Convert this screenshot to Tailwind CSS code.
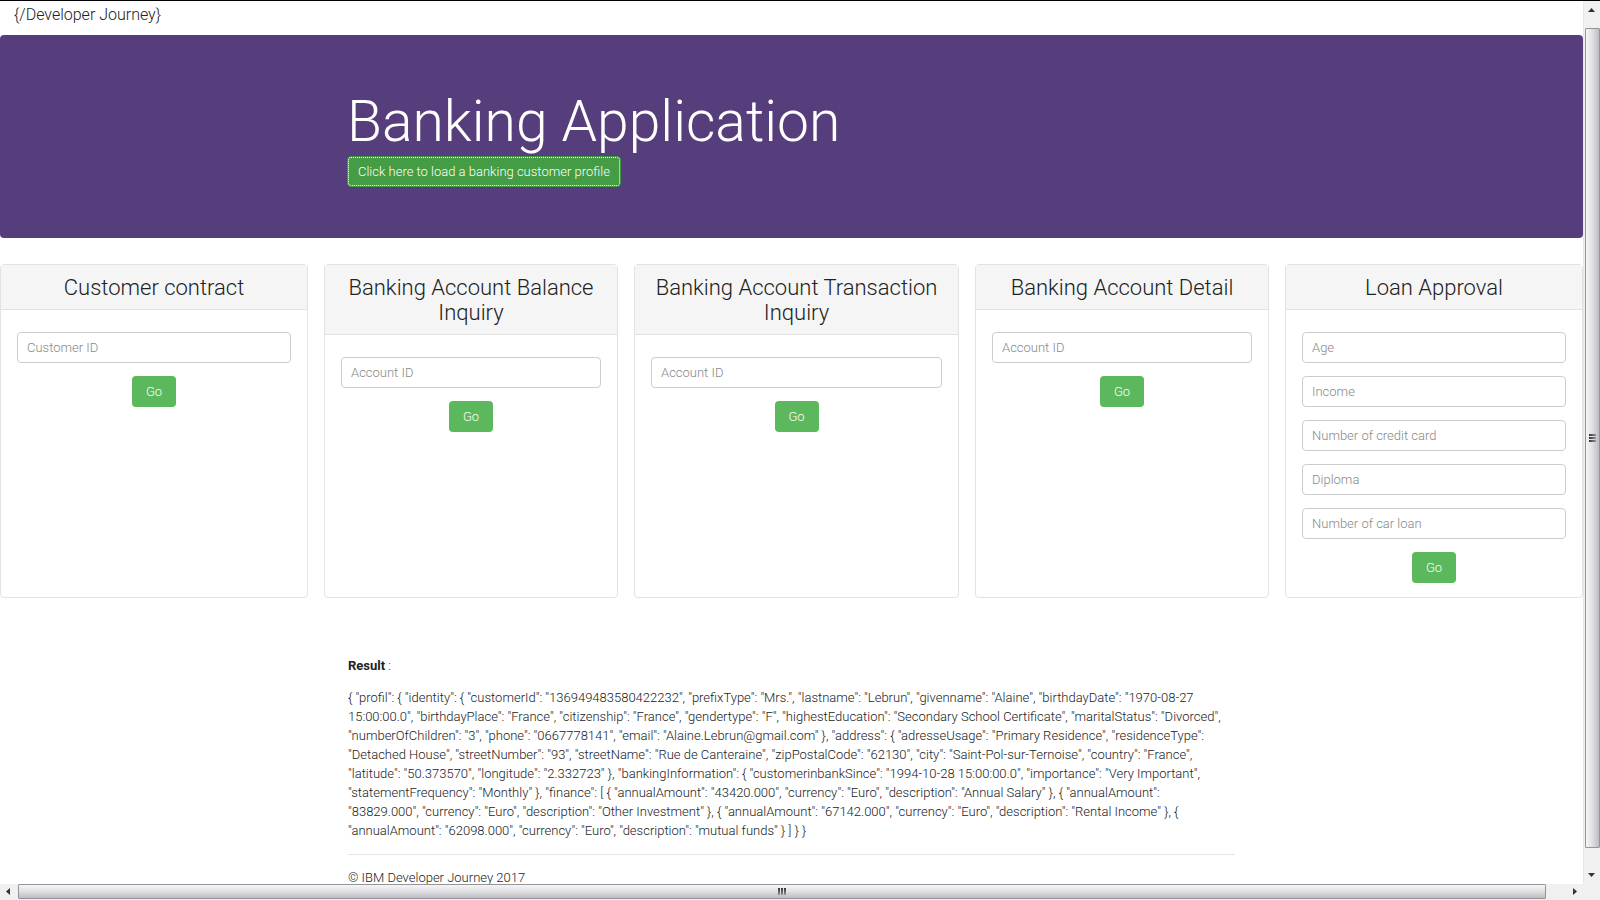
<!DOCTYPE html>
<html lang="en">
<head>
<meta charset="utf-8">
<meta name="viewport" content="width=device-width, initial-scale=1">
<title>Banking Application</title>
<script src="https://cdn.jsdelivr.net/npm/@tailwindcss/browser@4"></script>
</head>
<body class="flex h-screen flex-col overflow-hidden border-t border-black bg-white font-['Roboto','Liberation_Sans',sans-serif] text-[13px] font-light leading-[19px] text-[#202223]">
<div class="flex min-h-0 flex-1">
  <div class="min-w-0 flex-1 overflow-hidden">
    <header class="h-[34px] px-3.5 pt-0.5 text-base leading-6"><a href="#">{/Developer Journey}</a></header>

    <section class="rounded bg-[#563d7c] px-4 pt-[52px] pb-[51px]">
      <div class="mx-auto max-w-[889px]">
        <h1 class="text-[57px] leading-[69px] text-white">Banking Application</h1>
        <button type="button" class="h-[31px] rounded-sm border border-[#419641] bg-[#449d44] px-2.5 text-[13px] text-white outline-1 -outline-offset-2 outline-dotted outline-white">Click here to load a banking customer profile</button>
      </div>
    </section>

    <main>
      <div class="mt-[26px] grid grid-cols-[308fr_294fr_325fr_294fr_298fr] gap-4 text-center">
        <section class="rounded border border-[#e2e2e2]">
          <h2 class="border-b border-[#e2e2e2] bg-[#f5f5f5] px-4 pt-2.5 pb-[9px] text-[22px] leading-[25px]">Customer contract</h2>
          <form class="flex flex-col items-center gap-[13px] px-4 pt-[22px] pb-3.5">
            <input type="text" aria-label="Customer ID" placeholder="Customer ID" class="h-[31px] w-full rounded border border-[#ccc] px-[9px] placeholder:text-[#888]">
            <button type="button" class="h-[31px] w-11 rounded-sm bg-[#5cb85c] text-white">Go</button>
          </form>
        </section>
        <section class="rounded border border-[#e2e2e2]">
          <h2 class="border-b border-[#e2e2e2] bg-[#f5f5f5] px-4 pt-2.5 pb-[9px] text-[22px] leading-[25px]">Banking Account Balance Inquiry</h2>
          <form class="flex flex-col items-center gap-[13px] px-4 pt-[22px] pb-3.5">
            <input type="text" aria-label="Account ID" placeholder="Account ID" class="h-[31px] w-full rounded border border-[#ccc] px-[9px] placeholder:text-[#888]">
            <button type="button" class="h-[31px] w-11 rounded-sm bg-[#5cb85c] text-white">Go</button>
          </form>
        </section>
        <section class="rounded border border-[#e2e2e2]">
          <h2 class="border-b border-[#e2e2e2] bg-[#f5f5f5] px-4 pt-2.5 pb-[9px] text-[22px] leading-[25px]">Banking Account Transaction Inquiry</h2>
          <form class="flex flex-col items-center gap-[13px] px-4 pt-[22px] pb-3.5">
            <input type="text" aria-label="Account ID" placeholder="Account ID" class="h-[31px] w-full rounded border border-[#ccc] px-[9px] placeholder:text-[#888]">
            <button type="button" class="h-[31px] w-11 rounded-sm bg-[#5cb85c] text-white">Go</button>
          </form>
        </section>
        <section class="rounded border border-[#e2e2e2]">
          <h2 class="border-b border-[#e2e2e2] bg-[#f5f5f5] px-4 pt-2.5 pb-[9px] text-[22px] leading-[25px]">Banking Account Detail</h2>
          <form class="flex flex-col items-center gap-[13px] px-4 pt-[22px] pb-3.5">
            <input type="text" aria-label="Account ID" placeholder="Account ID" class="h-[31px] w-full rounded border border-[#ccc] px-[9px] placeholder:text-[#888]">
            <button type="button" class="h-[31px] w-11 rounded-sm bg-[#5cb85c] text-white">Go</button>
          </form>
        </section>
        <section class="rounded border border-[#e2e2e2]">
          <h2 class="border-b border-[#e2e2e2] bg-[#f5f5f5] px-4 pt-2.5 pb-[9px] text-[22px] leading-[25px]">Loan Approval</h2>
          <form class="flex flex-col items-center gap-[13px] px-4 pt-[22px] pb-3.5">
            <input type="text" aria-label="Age" placeholder="Age" class="h-[31px] w-full rounded border border-[#ccc] px-[9px] placeholder:text-[#888]">
            <input type="text" aria-label="Income" placeholder="Income" class="h-[31px] w-full rounded border border-[#ccc] px-[9px] placeholder:text-[#888]">
            <input type="text" aria-label="Number of credit card" placeholder="Number of credit card" class="h-[31px] w-full rounded border border-[#ccc] px-[9px] placeholder:text-[#888]">
            <input type="text" aria-label="Diploma" placeholder="Diploma" class="h-[31px] w-full rounded border border-[#ccc] px-[9px] placeholder:text-[#888]">
            <input type="text" aria-label="Number of car loan" placeholder="Number of car loan" class="h-[31px] w-full rounded border border-[#ccc] px-[9px] placeholder:text-[#888]">
            <button type="button" class="h-[31px] w-11 rounded-sm bg-[#5cb85c] text-white">Go</button>
          </form>
        </section>
      </div>

      <section class="mx-auto mt-[58px] max-w-[887px]">
        <p><strong class="font-bold">Result</strong> :</p>
        <p class="mt-[13px]">{ "profil": { "identity": { "customerId": "136949483580422232", "prefixType": "Mrs.", "lastname": "Lebrun", "givenname": "Alaine", "birthdayDate": "1970-08-27<br>
        15:00:00.0", "birthdayPlace": "France", "citizenship": "France", "gendertype": "F", "highestEducation": "Secondary School Certificate", "maritalStatus": "Divorced",<br>
        "numberOfChildren": "3", "phone": "0667778141", "email": "Alaine.Lebrun@gmail.com" }, "address": { "adresseUsage": "Primary Residence", "residenceType":<br>
        "Detached House", "streetNumber": "93", "streetName": "Rue de Canteraine", "zipPostalCode": "62130", "city": "Saint-Pol-sur-Ternoise", "country": "France",<br>
        "latitude": "50.373570", "longitude": "2.332723" }, "bankingInformation": { "customerinbankSince": "1994-10-28 15:00:00.0", "importance": "Very Important",<br>
        "statementFrequency": "Monthly" }, "finance": [ { "annualAmount": "43420.000", "currency": "Euro", "description": "Annual Salary" }, { "annualAmount":<br>
        "83829.000", "currency": "Euro", "description": "Other Investment" }, { "annualAmount": "67142.000", "currency": "Euro", "description": "Rental Income" }, {<br>
        "annualAmount": "62098.000", "currency": "Euro", "description": "mutual funds" } ] } }</p>
      </section>
    </main>
    <footer class="mx-auto mt-3.5 max-w-[887px] border-t border-[#e5e5e5] pt-[13px]">
      <p>© IBM Developer Journey 2017</p>
    </footer>
  </div>

  <!-- vertical scrollbar -->
  <div class="flex w-[17px] shrink-0 flex-col items-center border-l border-[#e8e8e8] bg-[#f0f0f0]">
    <svg class="h-[27px] w-4 shrink-0" viewBox="0 0 16 27"><path d="M4 11 7.500 7 11 11Z" fill="#333"/></svg>
    <div class="flex w-[15px] flex-1 flex-col items-center justify-center gap-px rounded-[1px] border border-[#959599] bg-linear-to-r from-[#f6f6f6] via-[#dfdfe2] to-[#bcbcc2]">
      <i class="h-0.5 w-[7px] bg-linear-to-r from-[#333] to-[#999]"></i>
      <i class="h-0.5 w-[7px] bg-linear-to-r from-[#333] to-[#999]"></i>
      <i class="h-0.5 w-[7px] bg-linear-to-r from-[#333] to-[#999]"></i>
    </div>
    <svg class="h-9 w-4 shrink-0" viewBox="0 0 16 36"><path d="M4 25 7.500 29 11 25Z" fill="#333"/></svg>
  </div>
</div>

<!-- horizontal scrollbar -->
<div class="flex h-4 shrink-0 items-start bg-[#f0f0f0] pr-[17px]">
  <svg class="h-4 w-[18px] shrink-0" viewBox="0 0 18 16"><path d="M10 4 6 7.500 10 11Z" fill="#333"/></svg>
  <div class="flex h-[15px] flex-1 items-center justify-center gap-px rounded-[1px] border border-[#959599] bg-linear-to-b from-[#f6f6f6] via-[#dfdfe2] to-[#bcbcc2]">
    <i class="h-[7px] w-0.5 bg-linear-to-b from-[#333] to-[#999]"></i>
    <i class="h-[7px] w-0.5 bg-linear-to-b from-[#333] to-[#999]"></i>
    <i class="h-[7px] w-0.5 bg-linear-to-b from-[#333] to-[#999]"></i>
  </div>
  <svg class="h-4 w-[37px] shrink-0" viewBox="0 0 37 16"><path d="M27 4 31 7.500 27 11Z" fill="#333"/></svg>
</div>
</body>
</html>
